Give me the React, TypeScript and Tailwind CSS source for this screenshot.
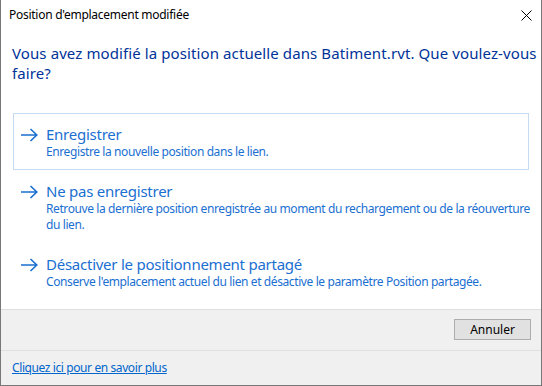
import React from "react";

const Arrow = () => (
  <svg width="18" height="14" viewBox="0 0 18 14" className="shrink-0">
    <path d="M1 7 H16.5 M10.5 1 L16.8 7 L10.5 13" fill="none" stroke="#1a6fd1" strokeWidth="1.6" />
  </svg>
);

function Option({ title, desc, boxed }: { title: string; desc: string[]; boxed?: boolean }) {
  return (
    <div
      className={
        "mx-[12px] border pl-[6px] pr-[4px] pt-[10px] pb-[9px] flex gap-[8px] " +
        (boxed ? "border-[#c3dcf1]" : "border-transparent")
      }
    >
      <div className="h-[20px] flex items-center pt-[2px]">
        <Arrow />
      </div>
      <div className="flex flex-col min-w-0">
        <div className="text-[15px] leading-[20px] tracking-[-0.25px] text-[#1a6fd1]">{title}</div>
        {desc.map((d) => (
          <div key={d} className="text-[12px] leading-[16px] tracking-[-0.4px] text-[#1a6fd1] whitespace-nowrap">
            {d}
          </div>
        ))}
      </div>
    </div>
  );
}

export default function App() {
  return (
    <div
      className="w-[542px] h-[386px] bg-white border-l border-r border-b border-[#777777] flex flex-col overflow-hidden"
      style={{ fontFamily: '"Noto Sans", "Open Sans", sans-serif' }}
    >
      <div className="h-[30px] flex items-center justify-between pl-[8px] pr-[9px] shrink-0">
        <span className="text-[12px] tracking-[-0.27px] text-black">Position d'emplacement modifiée</span>
        <svg width="11" height="11" viewBox="0 0 11 11">
          <path d="M0.5 0.5 L10.5 10.5 M10.5 0.5 L0.5 10.5" stroke="#000" strokeWidth="1" />
        </svg>
      </div>
      <div className="pt-[13px] px-[11px] text-[15px] leading-[20px] tracking-[0.1px] text-[#003399]">
        <div className="whitespace-nowrap">Vous avez modifié la position actuelle dans Batiment.rvt. Que voulez-vous</div>
        <div>faire?</div>
      </div>
      <div className="mt-[30px] flex flex-col">
        <Option boxed title="Enregistrer" desc={["Enregistre la nouvelle position dans le lien."]} />
        <Option
          title="Ne pas enregistrer"
          desc={[
            "Retrouve la dernière position enregistrée au moment du rechargement ou de la réouverture",
            "du lien.",
          ]}
        />
        <Option
          title="Désactiver le positionnement partagé"
          desc={["Conserve l'emplacement actuel du lien et désactive le paramètre Position partagée."]}
        />
      </div>
      <div className="flex-1" />
      <div className="shrink-0 bg-[#f0f0f0] border-t border-[#dfdfdf]">
        <div className="flex justify-end pt-[9px] pb-[10px] pr-[10px] border-b border-[#dfdfdf]">
          <button className="w-[77px] h-[21px] bg-[#e1e1e1] border border-[#adadad] text-[12px] text-black leading-none">
            Annuler
          </button>
        </div>
        <div className="h-[34px] flex items-center pl-[11px]">
          <a className="text-[12px] tracking-[-0.4px] text-[#0066cc] underline cursor-pointer">
            Cliquez ici pour en savoir plus
          </a>
        </div>
      </div>
    </div>
  );
}
